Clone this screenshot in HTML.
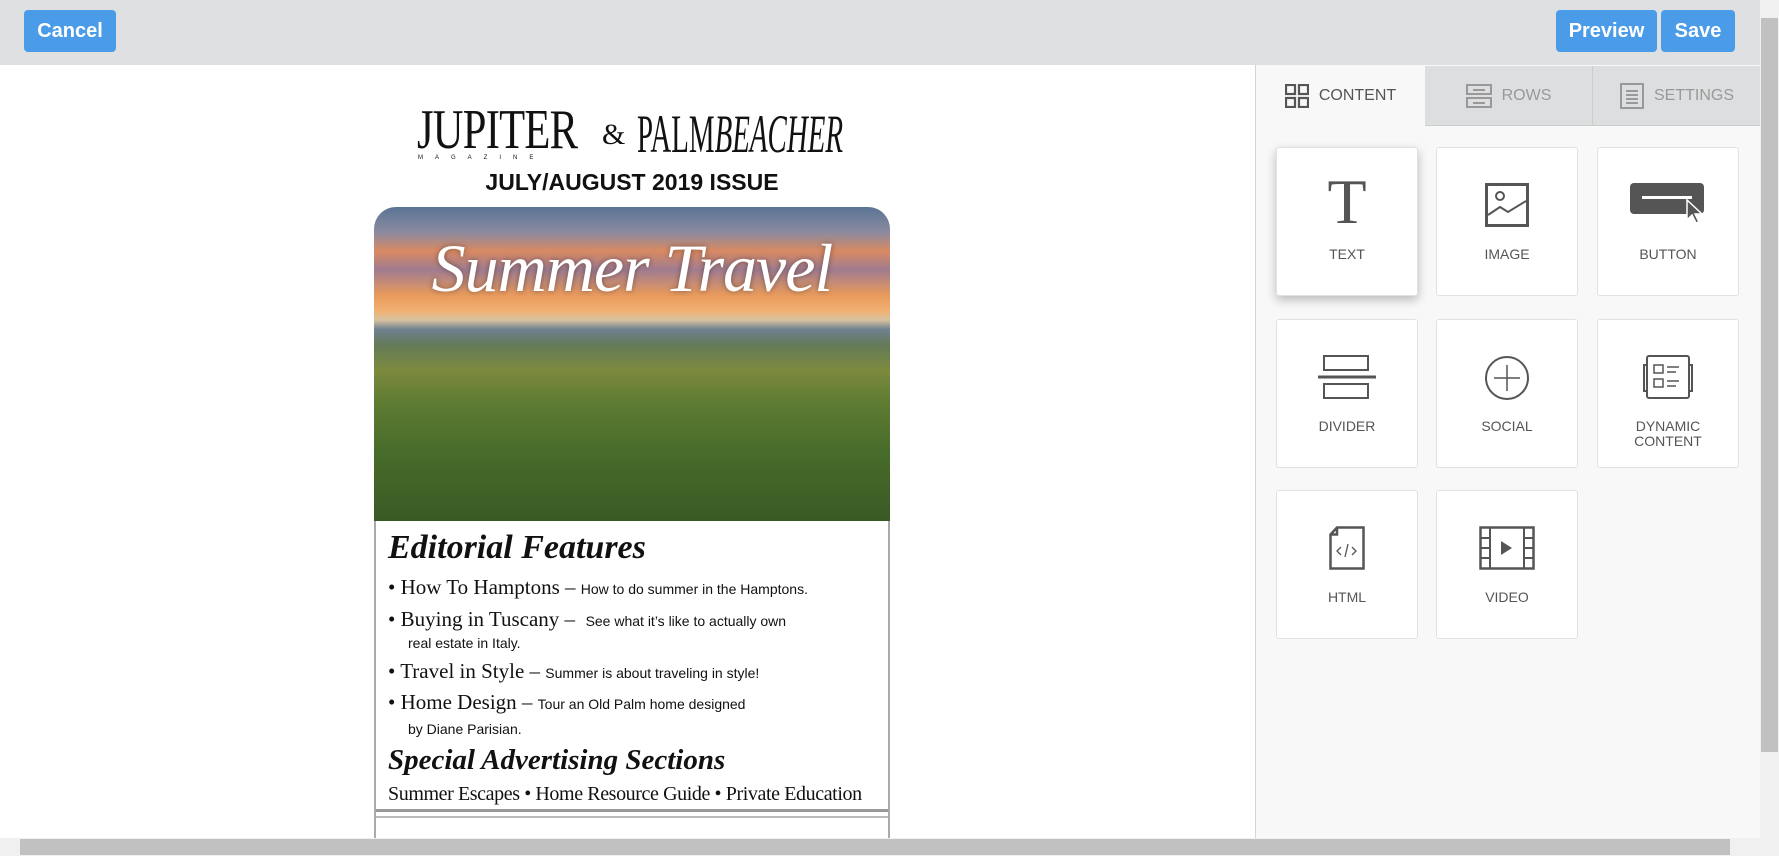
<!DOCTYPE html>
<html><head><meta charset="utf-8"><style>
*{box-sizing:border-box;margin:0;padding:0}
body{width:1779px;height:856px;overflow:hidden;background:#fff;font-family:"Liberation Sans",sans-serif;position:relative}
.top{position:absolute;left:0;top:0;width:1760px;height:65px;background:#dfe0e2}
.btn{position:absolute;top:10px;height:42px;background:#4a9be8;color:#fff;font-weight:bold;font-size:20px;border-radius:4px;text-align:center;line-height:42px}
.vs{position:absolute;left:1760px;top:0;width:19px;height:838px;background:#f0f0f0}
.vs .th{position:absolute;left:1px;top:18px;width:17px;height:734px;background:#c1c1c1}
.hs{position:absolute;left:0;top:838px;width:1779px;height:18px;background:#f0f0f0}
.hs .th{position:absolute;left:20px;top:1px;width:1710px;height:16px;background:#c1c1c1}
.panel{position:absolute;left:1255px;top:65px;width:505px;height:773px;background:#f8f8f8;border-left:1px solid #d5d5d5}
.tab{position:absolute;top:1px;height:60px;font-size:16px;color:#555;display:flex;align-items:center;justify-content:center;gap:10px}
.tab.off{background:#dcdee0;color:#999;border-bottom:1px solid #ccc}
.card{position:absolute;width:142px;height:149px;background:#fff;border:1px solid #e1e1e1;border-radius:3px;text-align:center;font-size:14px;color:#555}
.card svg{position:absolute;left:50%;transform:translateX(-50%);top:35px}
.card span{position:absolute;left:0;right:0;top:99px;line-height:15px}
.email{position:absolute;left:374px;top:207px;width:516px}
.img{height:314px;border-radius:22px 22px 0 0;background:linear-gradient(180deg,#5a7494 0%,#8a8aa0 8%,#d98a62 14%,#a07c90 20%,#e89a5c 28%,#f2b070 33%,#d7c2a0 36%,#6f8090 39%,#647a58 44%,#7c8a3e 52%,#5f7c33 62%,#476c2a 78%,#3a5a24 100%);position:relative;overflow:hidden}
.img .t{position:absolute;left:0;right:0;top:22px;text-align:center;font-family:"Liberation Serif",serif;font-style:italic;font-size:68px;color:#fff;text-shadow:0 0 6px rgba(0,0,0,.4);letter-spacing:-1px}
.box{border:2px solid #aaa;border-top:none;border-bottom:none;background:#fff;height:317px;position:relative;font-family:"Liberation Serif",serif;color:#111}
.l{position:absolute;left:12px;white-space:nowrap}
.s{font-family:"Liberation Sans",sans-serif;font-size:14px}
</style></head><body>
<div class="top"></div>
<div class="btn" style="left:24px;width:92px">Cancel</div>
<div class="btn" style="left:1556px;width:101px">Preview</div>
<div class="btn" style="left:1661px;width:74px">Save</div>

<div style="position:absolute;left:417px;top:100px;font-family:'Liberation Serif',serif;font-size:56px;line-height:60px;color:#111;transform:scaleX(.76);transform-origin:left;letter-spacing:-1px;white-space:nowrap">JUPITER</div>
<div style="position:absolute;left:418px;top:155px;font-size:6px;letter-spacing:12px;color:#111">MAGAZINE</div>
<div style="position:absolute;left:602px;top:118px;font-family:'Liberation Serif',serif;font-size:30px;color:#111">&amp;</div>
<div style="position:absolute;left:637px;top:104px;font-family:'Liberation Serif',serif;font-size:54px;line-height:60px;color:#111;transform:scaleX(.535);transform-origin:left;white-space:nowrap">PALM<i>BEACHER</i></div>
<div style="position:absolute;left:374px;top:169px;width:516px;text-align:center;font-weight:bold;font-size:23px;color:#111">JULY/AUGUST 2019 ISSUE</div>

<div class="email">
<div class="img"><div class="t">Summer Travel</div></div>
<div class="box">
<div class="l" style="top:8px;font-size:34px;font-weight:bold;font-style:italic">Editorial Features</div>
<div class="l" style="top:54px;font-size:21px">• How To Hamptons – <span class="s">How to do summer in the Hamptons.</span></div>
<div class="l" style="top:86px;font-size:21px">• Buying in Tuscany – &nbsp;<span class="s">See what it’s like to actually own</span></div>
<div class="l s" style="top:114px;left:32px">real estate in Italy.</div>
<div class="l" style="top:138px;font-size:21px">• Travel in Style – <span class="s">Summer is about traveling in style!</span></div>
<div class="l" style="top:169px;font-size:21px">• Home Design – <span class="s">Tour an Old Palm home designed</span></div>
<div class="l s" style="top:200px;left:32px">by Diane Parisian.</div>
<div class="l" style="top:223px;font-size:29px;font-weight:bold;font-style:italic">Special Advertising Sections</div>
<div class="l" style="top:262px;font-size:20px;letter-spacing:-.4px">Summer Escapes • Home Resource Guide • Private Education</div>
<div style="position:absolute;left:0;right:0;top:288px;height:3px;background:#999"></div>
<div style="position:absolute;left:0;right:0;top:295px;height:2px;background:#bbb"></div>
</div>
</div>

<div class="panel">
<div class="tab" style="left:0;width:169px"><svg width="24" height="24" viewBox="0 0 24 24" fill="none" stroke="#555" stroke-width="2.2"><rect x="1" y="1" width="9" height="9"/><rect x="14" y="1" width="9" height="9"/><rect x="1" y="14" width="9" height="9"/><rect x="14" y="14" width="9" height="9"/></svg>CONTENT</div>
<div class="tab off" style="left:169px;width:168px;border-right:1px solid #ccc"><svg width="26" height="24" viewBox="0 0 26 24" fill="none" stroke="#999" stroke-width="2"><rect x="1" y="1" width="24" height="9"/><rect x="1" y="14" width="24" height="9"/><path d="M7 6h12M7 19h12"/></svg>ROWS</div>
<div class="tab off" style="left:337px;width:168px"><svg width="24" height="26" viewBox="0 0 24 26" fill="none" stroke="#999" stroke-width="2"><rect x="1" y="1" width="22" height="24"/><path d="M6 8h12M6 12h12M6 16h12M6 20h12"/></svg>SETTINGS</div>

<div class="card" style="left:20px;top:82px;box-shadow:0 4px 10px rgba(0,0,0,.25)"><div style="position:absolute;left:0;right:0;top:22px;font-family:'Liberation Serif',serif;font-size:64px;color:#555;line-height:64px">T</div><span>TEXT</span></div>
<div class="card" style="left:180px;top:82px"><svg width="44" height="44" viewBox="0 0 44 44" fill="none" stroke="#555" stroke-width="3"><rect x="1.5" y="1.5" width="41" height="41"/><circle cx="15" cy="13" r="4" stroke-width="2"/><path d="M3 32l12-8 8 5 18-11" stroke-width="2"/></svg><span>IMAGE</span></div>
<div class="card" style="left:341px;top:82px"><svg width="76" height="46" viewBox="0 0 76 46"><rect x="0" y="0" width="74" height="31" rx="4" fill="#555"/><rect x="12" y="13" width="50" height="3" fill="#fff"/><path d="M57 17l0 20 5-5 4 8 3-1-4-8 7 0z" fill="#555" stroke="#fff" stroke-width="1.5"/></svg><span>BUTTON</span></div>

<div class="card" style="left:20px;top:254px"><svg width="58" height="44" viewBox="0 0 58 44" fill="none" stroke="#555" stroke-width="2"><rect x="6" y="1" width="44" height="14"/><rect x="6" y="29" width="44" height="14"/><path d="M0 22h58" stroke-width="3"/></svg><span>DIVIDER</span></div>
<div class="card" style="left:180px;top:254px"><svg width="46" height="46" viewBox="0 0 46 46" fill="none" stroke="#555" stroke-width="2"><circle cx="23" cy="23" r="21"/><path d="M23 10v26M10 23h26" stroke-width="1.5"/></svg><span>SOCIAL</span></div>
<div class="card" style="left:341px;top:254px"><svg width="50" height="44" viewBox="0 0 50 44" fill="none" stroke="#555" stroke-width="2"><rect x="4" y="1" width="42" height="42" rx="2"/><path d="M4 10H1v26h3M46 10h3v26h-3"/><rect x="11" y="10" width="9" height="8" stroke-width="1.5"/><rect x="11" y="24" width="9" height="8" stroke-width="1.5"/><path d="M24 12h12M24 17h9M24 26h12M24 31h9" stroke-width="1.5"/></svg><span>DYNAMIC<br>CONTENT</span></div>

<div class="card" style="left:20px;top:425px"><svg width="36" height="44" viewBox="0 0 36 44" fill="none" stroke="#555" stroke-width="2.5"><path d="M8 1.5h26.5v41h-33v-34z M1.5 8.5h6.5v-7"/><path d="M12 21l-4 4 4 4M23 21l4 4-4 4M19 18l-3 13" stroke-width="1.3"/></svg><span>HTML</span></div>
<div class="card" style="left:180px;top:425px"><svg width="56" height="44" viewBox="0 0 56 44" fill="none" stroke="#555" stroke-width="2.5"><rect x="1.5" y="1.5" width="53" height="41"/><path d="M11 1.5v41M45 1.5v41M1.5 12h9.5M1.5 22h9.5M1.5 32h9.5M45 12h9.5M45 22h9.5M45 32h9.5" stroke-width="2"/><path d="M22 15v14l11-7z" fill="#555" stroke="none"/></svg><span>VIDEO</span></div>
</div>

<div class="vs"><div class="th"></div></div>
<div class="hs"><div class="th"></div></div>
</body></html>
